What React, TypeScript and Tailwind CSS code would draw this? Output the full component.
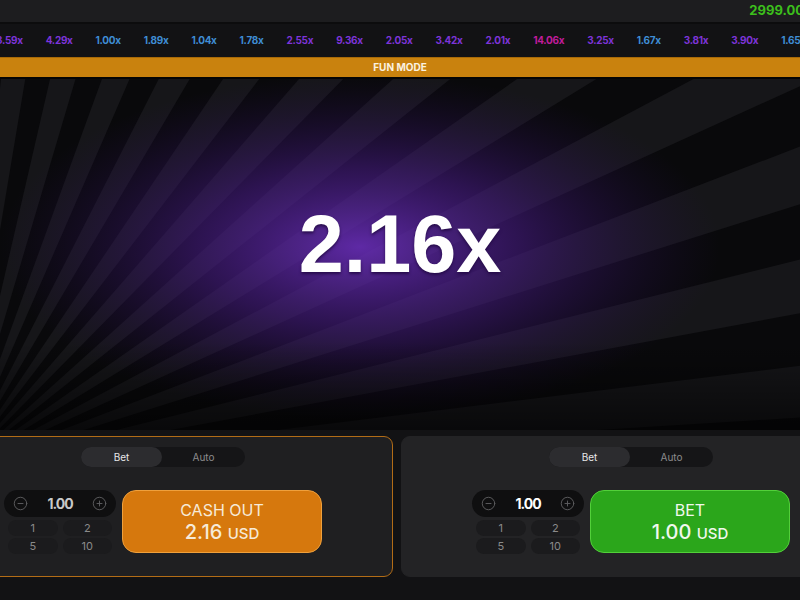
import { CircleMinus, CirclePlus } from "lucide-react"

const history = [
  { v: "3.59x", c: "text-[#7d34d8]" },
  { v: "4.29x", c: "text-[#7d34d8]" },
  { v: "1.00x", c: "text-[#3f8dd4]" },
  { v: "1.89x", c: "text-[#3f8dd4]" },
  { v: "1.04x", c: "text-[#3f8dd4]" },
  { v: "1.78x", c: "text-[#3f8dd4]" },
  { v: "2.55x", c: "text-[#7d34d8]" },
  { v: "9.36x", c: "text-[#7d34d8]" },
  { v: "2.05x", c: "text-[#7d34d8]" },
  { v: "3.42x", c: "text-[#7d34d8]" },
  { v: "2.01x", c: "text-[#7d34d8]" },
  { v: "14.06x", c: "text-[#c01c9c]" },
  { v: "3.25x", c: "text-[#7d34d8]" },
  { v: "1.67x", c: "text-[#3f8dd4]" },
  { v: "3.81x", c: "text-[#7d34d8]" },
  { v: "3.90x", c: "text-[#7d34d8]" },
  { v: "1.65x", c: "text-[#3f8dd4]" },
]

function Rays() {
  const cx = -40
  const cy = 390
  const r = 1400
  const wedges = []
  for (let a = -112; a < 20; a += 7) {
    const a1 = (a * Math.PI) / 180
    const a2 = ((a + 3.5) * Math.PI) / 180
    const pts = `${cx},${cy} ${cx + r * Math.cos(a1)},${cy + r * Math.sin(a1)} ${cx + r * Math.cos(a2)},${cy + r * Math.sin(a2)}`
    wedges.push(<polygon key={a} points={pts} fill="#161619" />)
  }
  return (
    <svg className="absolute inset-0" width="800" height="351" viewBox="0 0 800 351">
      <defs>
        <radialGradient id="glow" cx="360" cy="168" r="360" gradientUnits="userSpaceOnUse" gradientTransform="translate(360 168) scale(1 0.48) translate(-360 -168)">
          <stop offset="0" stopColor="#6d2fc0" stopOpacity="0.85" />
          <stop offset="0.45" stopColor="#4a1c8a" stopOpacity="0.55" />
          <stop offset="1" stopColor="#2a0f55" stopOpacity="0" />
        </radialGradient>
        <linearGradient id="fade" x1="0" y1="0" x2="0" y2="1">
          <stop offset="0.75" stopColor="#000" stopOpacity="0" />
          <stop offset="1" stopColor="#000" stopOpacity="0.6" />
        </linearGradient>
      </defs>
      <rect width="800" height="351" fill="#09090b" />
      {wedges}
      <rect width="800" height="351" fill="url(#glow)" />
      <rect width="800" height="351" fill="url(#fade)" />
    </svg>
  )
}

function Tabs() {
  return (
    <div className="flex h-[20px] w-[164px] rounded-full bg-[#151517] text-[10px]">
      <div className="flex w-[81px] items-center justify-center rounded-full bg-[#2c2c2f] text-[#e8e8e8]">Bet</div>
      <div className="flex flex-1 items-center justify-center text-[#8c8c8c]">Auto</div>
    </div>
  )
}

function Stepper({ dim }: { dim?: boolean }) {
  return (
    <div className="flex w-[112px] flex-col gap-[3px]">
      <div className="flex h-[27px] items-center justify-between rounded-full bg-[#0f0f10] px-[9px]">
        <CircleMinus size={15} strokeWidth={1.5} className="text-[#5e5e60]" />
        <span className={`text-[14px] font-bold tracking-[-1px] ${dim ? "text-[#c9c9c9]" : "text-white"}`}>1.00</span>
        <CirclePlus size={15} strokeWidth={1.5} className="text-[#5e5e60]" />
      </div>
      <div className="grid grid-cols-2 gap-x-[5px] gap-y-[2px] px-[4px] text-[11px] text-[#8a8a8a]">
        <div className="flex h-[16px] items-center justify-center rounded-full bg-[#1b1b1d]">1</div>
        <div className="flex h-[16px] items-center justify-center rounded-full bg-[#1b1b1d]">2</div>
        <div className="flex h-[16px] items-center justify-center rounded-full bg-[#1b1b1d]">5</div>
        <div className="flex h-[16px] items-center justify-center rounded-full bg-[#1b1b1d]">10</div>
      </div>
    </div>
  )
}

function Panel({ cashout }: { cashout?: boolean }) {
  return (
    <div
      className={`flex h-[141px] w-[460px] shrink-0 flex-col items-center rounded-[9px] pt-[10px] ${
        cashout ? "border-[1.5px] border-[#b26c16] bg-[#1f1f21]" : "border-[1.5px] border-[#232325] bg-[#232325]"
      }`}
    >
      <Tabs />
      <div className="mt-[23px] flex gap-[6px]">
        <Stepper dim={cashout} />
        {cashout ? (
          <div className="flex h-[63px] w-[200px] flex-col items-center justify-center rounded-[14px] border-[1.5px] border-[#efa03c] bg-[#d6780d] leading-none text-[#f6ead8]">
            <span className="text-[16px]">CASH OUT</span>
            <span className="mt-[4px] text-[20px] font-medium">
              2.16 <span className="text-[15px]">USD</span>
            </span>
          </div>
        ) : (
          <div className="flex h-[63px] w-[200px] flex-col items-center justify-center rounded-[14px] border-[1.5px] border-[#52d03a] bg-[#2ba61b] leading-none text-[#f1f8ee]">
            <span className="text-[16px]">BET</span>
            <span className="mt-[4px] text-[20px] font-medium">
              1.00 <span className="text-[15px]">USD</span>
            </span>
          </div>
        )}
      </div>
    </div>
  )
}

export default function App() {
  return (
    <div className="h-[600px] w-[800px] overflow-hidden bg-[#121214] font-['Inter',sans-serif]">
      {/* Balance bar */}
      <div className="flex h-[22px] items-center justify-end overflow-hidden bg-[#1d1d1f]">
        <span className="-mr-[4px] text-[13px] font-bold text-[#3cbf1c]">2999.00</span>
      </div>
      <div className="h-[2px] bg-[#0c0c0d]" />

      {/* History row */}
      <div className="flex h-[33px] items-center gap-[23px] overflow-hidden whitespace-nowrap bg-[#121214] text-[10px] font-bold tracking-[-0.3px]">
        {history.map((h, i) => (
          <span key={i} className={`${h.c} shrink-0 ${i === 0 ? "-ml-[4px]" : ""}`}>
            {h.v}
          </span>
        ))}
      </div>

      {/* Fun mode */}
      <div className="flex h-[20px] items-center justify-center border-t border-[#a86a08] bg-[#c9820e] text-[10px] font-bold text-[#fbf2e0]">
        FUN MODE
      </div>
      <div className="h-[2px] bg-[#050505]" />

      {/* Game area */}
      <div className="relative flex h-[351px] items-center justify-center overflow-hidden">
        <Rays />
        <span className="relative -mt-[20px] font-['Liberation_Sans',Arial,sans-serif] text-[81px] font-bold text-white [text-shadow:0_2px_3px_rgba(35,10,70,0.9)]">
          2.16x
        </span>
      </div>

      {/* Bet panels */}
      <div className="-ml-[67px] flex gap-[8px] pt-[6px]">
        <Panel cashout />
        <Panel />
      </div>
    </div>
  )
}
